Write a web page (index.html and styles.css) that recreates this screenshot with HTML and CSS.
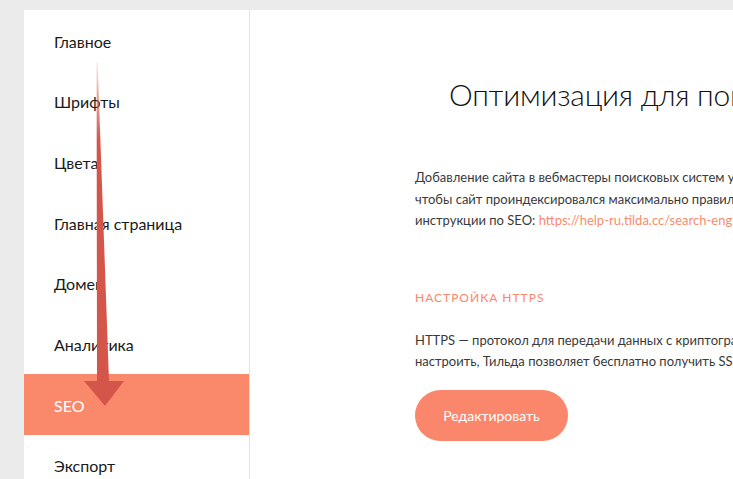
FILE: index.html
```html
<!DOCTYPE html>
<html lang="ru">
<head>
<meta charset="utf-8">
<title>SEO</title>
<link rel="stylesheet" href="styles.css">
</head>
<body>
<div class="app">
  <nav class="sidebar">
    <div class="item">Главное</div>
    <div class="item">Шрифты</div>
    <div class="item">Цвета</div>
    <div class="item">Главная страница</div>
    <div class="item">Домен</div>
    <div class="item">Аналитика</div>
    <div class="item active">SEO</div>
    <div class="item">Экспорт</div>
  </nav>
  <main class="content">
    <h1 class="title">Оптимизация для поисковых систем</h1>
    <p class="text">Добавление сайта в вебмастеры поисковых систем ускорит индексацию. Следуйте инструкциям,<br>чтобы сайт проиндексировался максимально правильно. Подробнее читайте в<br>инструкции по SEO: <a class="link" href="#">https://help-ru.tilda.cc/search-engines</a></p>
    <h2 class="section">Настройка HTTPS</h2>
    <p class="text">HTTPS — протокол для передачи данных с криптографической защитой. Чтобы его<br>настроить, Тильда позволяет бесплатно получить SSL-сертификат для вашего домена.</p>
    <button class="btn">Редактировать</button>
  </main>
</div>
<svg class="arrow" width="733" height="479" viewBox="0 0 733 479">
  <defs>
    <linearGradient id="fade" x1="0" y1="62" x2="0" y2="140" gradientUnits="userSpaceOnUse">
      <stop offset="0" stop-color="#d4564a" stop-opacity="0.15"/>
      <stop offset="1" stop-color="#d4564a" stop-opacity="1"/>
    </linearGradient>
  </defs>
  <polygon points="96.6,62 97.6,62 109,381 124,381 105,406 84,381 97,381" fill="url(#fade)"/>
</svg>
</body>
</html>
```
FILE: styles.css
```css
html, body {
  margin: 0;
  padding: 0;
  height: 100%;
}
body {
  background: #ebebeb;
  overflow: hidden;
  font-family: "Lato", "Open Sans", sans-serif;
  position: relative;
}
.app {
  display: flex;
  height: 100%;
  padding: 10px 0 0 24px;
  box-sizing: border-box;
}
.sidebar {
  width: 225px;
  flex: none;
  background: #fff;
  border-right: 1px solid #e2e2e2;
}
.item {
  height: 60.67px;
  display: flex;
  align-items: center;
  padding: 2px 0 0 30px;
  box-sizing: border-box;
  font-size: 16px;
  color: #1a1a1a;
}
.item.active {
  background: #fa896c;
  color: #fff;
}
.content {
  flex: 1;
  background: #fff;
  padding: 0 0 0 165px;
  overflow: hidden;
  white-space: nowrap;
}
.title {
  margin: 64px 0 0 34px;
  font-size: 30px;
  font-weight: 300;
  letter-spacing: -0.25px;
  line-height: 40px;
  color: #111;
}
.text {
  margin: 0;
  font-size: 13px;
  line-height: 21.5px;
  color: #3a3a3a;
}
.title + .text {
  margin-top: 53px;
}
.link {
  color: #f98b6e;
  text-decoration: none;
}
.section {
  margin: 58px 0 0;
  font-size: 12px;
  font-weight: 400;
  letter-spacing: 1px;
  text-transform: uppercase;
  color: #f9876d;
  line-height: 16px;
}
.section + .text {
  margin-top: 24px;
}
.btn {
  display: block;
  margin-top: 17px;
  width: 153px;
  height: 51px;
  border: none;
  border-radius: 26px;
  background: #fa876b;
  color: #fff;
  font-family: inherit;
  font-size: 14px;
  padding: 0;
}
.arrow {
  position: absolute;
  left: 0;
  top: 0;
  pointer-events: none;
}
```
